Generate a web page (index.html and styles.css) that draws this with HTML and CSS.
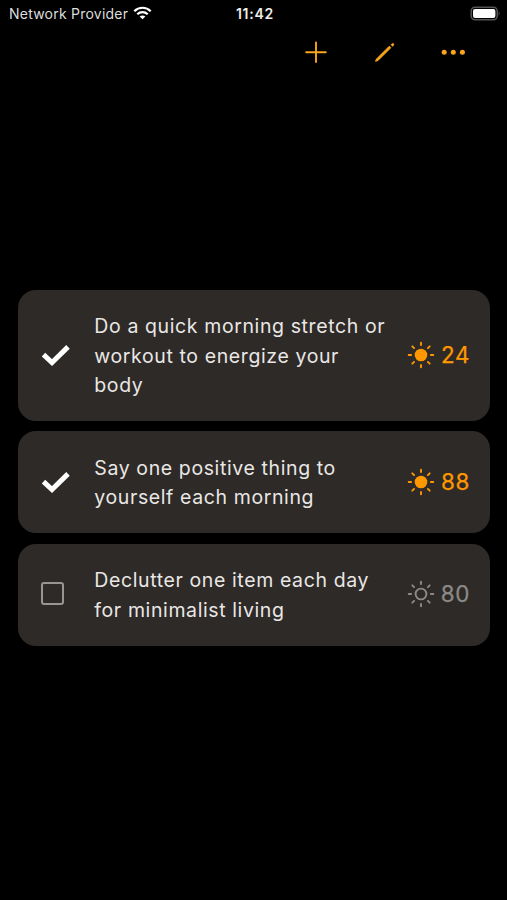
FILE: index.html
```html
<!DOCTYPE html>
<html lang="en">
<head>
<meta charset="utf-8">
<title>Habits</title>
<link rel="stylesheet" href="styles.css">
</head>
<body>
<svg class="defs" aria-hidden="true">
  <symbol id="rays" viewBox="-14 -14 28 28">
    <path d="M0-9.9V-12.3M0 9.9V12.3M-9.9 0H-12.3M9.9 0H12.3M-6.9-6.9L-8.7-8.7M6.9-6.9L8.7-8.7M-6.9 6.9L-8.7 8.7M6.9 6.9L8.7 8.7" fill="none" stroke="currentColor" stroke-width="1.9" stroke-linecap="round"/>
  </symbol>
  <symbol id="check" viewBox="0 0 30 24">
    <path d="M3.5 11.6L12 19.5L28 3.9" fill="none" stroke="currentColor" stroke-width="5"/>
  </symbol>
</svg>
<header class="status">
  <div class="carrier"><span>Network Provider</span>
    <svg class="wifi" viewBox="0 0 20 14"><g fill="none" stroke="currentColor" stroke-width="2.3"><path d="M1.4 5.1C6.2.3 13.8.3 18.6 5.1"/><path d="M4.5 8.3C7.6 5.3 12.4 5.3 15.5 8.3"/></g><path d="M7 10.7C8.7 9.2 11.3 9.2 13 10.7L10 13.6Z" fill="currentColor"/></svg>
  </div>
  <time class="clock">11:42</time>
  <svg class="battery" viewBox="0 0 31 15"><rect x="1.2" y="1.2" width="26" height="12.6" rx="3.8" fill="none" stroke="#555" stroke-width="1.5"/><rect x="3" y="3" width="22.4" height="9" rx="2" fill="#fff"/><path d="M28.6 5.3Q30.6 7.5 28.6 9.7Z" fill="#555"/></svg>
</header>
<nav class="toolbar">
  <svg class="tool" viewBox="0 0 24 24"><path d="M12 2.4V22M2.2 12.2H21.8" fill="none" stroke="currentColor" stroke-width="1.9" stroke-linecap="round"/></svg>
  <svg class="tool" viewBox="0 0 24 24"><path d="M2.6 21.3L3.5 19L16.3 6.2L17.8 7.7L5 20.5Z" fill="currentColor" stroke="currentColor" stroke-width="1" stroke-linejoin="round"/><path d="M17.9 4.7L18.9 3.7Q19.9 3 20.7 3.7Q21.3 4.5 20.6 5.4L19.6 6.4Z" fill="currentColor" stroke="currentColor" stroke-width=".4"/></svg>
  <svg class="tool" viewBox="0 0 24 24"><g fill="currentColor"><circle cx="3.2" cy="12.3" r="2.5"/><circle cx="12.3" cy="12.3" r="2.5"/><circle cx="21.4" cy="12.3" r="2.5"/></g></svg>
</nav>
<main class="habits">
  <article class="card">
    <svg class="mark"><use href="#check"/></svg>
    <p class="title">Do a quick morning stretch or<br>workout to energize your<br>body</p>
    <div class="streak"><svg class="sun" viewBox="-14 -14 28 28"><circle r="6.3" fill="currentColor"/><use href="#rays" x="-14" y="-14" width="28" height="28"/></svg><span>24</span></div>
  </article>
  <article class="card">
    <svg class="mark"><use href="#check"/></svg>
    <p class="title">Say one positive thing to<br>yourself each morning</p>
    <div class="streak"><svg class="sun" viewBox="-14 -14 28 28"><circle r="6.3" fill="currentColor"/><use href="#rays" x="-14" y="-14" width="28" height="28"/></svg><span>88</span></div>
  </article>
  <article class="card">
    <div class="mark"><div class="box"></div></div>
    <p class="title">Declutter one item each day<br>for minimalist living</p>
    <div class="streak idle"><svg class="sun" viewBox="-14 -14 28 28"><circle r="5.4" fill="none" stroke="currentColor" stroke-width="1.9"/><use href="#rays" x="-14" y="-14" width="28" height="28"/></svg><span>80</span></div>
  </article>
</main>
</body>
</html>
```

FILE: styles.css
```css
* { box-sizing: border-box; }
body {
  margin: 0;
  height: 900px;
  overflow: hidden;
  display: flex;
  flex-direction: column;
  background: #000;
  color: #e9e7e5;
  font-family: Inter, "Liberation Sans", sans-serif;
}
svg { display: block; flex: none; }
.defs { display: none; }
.status {
  height: 28px;
  padding: 0 6px 2px 9px;
  display: grid;
  grid-template-columns: 1fr auto 1fr;
  align-items: center;
}
.carrier {
  display: flex;
  align-items: center;
  gap: 5px;
  font-size: 14px;
  letter-spacing: .23px;
  white-space: nowrap;
  color: #ddd;
}
.wifi { width: 19px; height: 14px; color: #fff; }
.clock {
  font-size: 14px;
  font-weight: 600;
  letter-spacing: .75px;
  color: #eee;
}
.battery { width: 31px; height: 15px; justify-self: end; }
.toolbar {
  height: 48px;
  padding-right: 42px;
  display: flex;
  justify-content: flex-end;
  align-items: center;
  gap: 44.5px;
  color: #f9a51d;
}
.tool { width: 24px; height: 24px; }
.habits {
  margin: 213.5px 17px 0 18px;
  display: flex;
  flex-direction: column;
  gap: 10.3px;
}
.card {
  padding: 21.6px 20px 21.6px 22px;
  display: flex;
  align-items: center;
  background: #2e2a27;
  border-radius: 18px;
}
.mark { width: 30px; height: 24px; margin-bottom: 1px; color: #fff; }
.box {
  width: 23px;
  height: 23px;
  margin-left: 1px;
  border: 2px solid #989592;
  border-radius: 3px;
}
.title {
  flex: 1;
  margin: 0 0 -.9px 24.3px;
  padding-top: 1.2px;
  font-size: 19.5px;
  line-height: 29.3px;
  letter-spacing: .61px;
  white-space: nowrap;
}
.streak {
  display: flex;
  align-items: center;
  gap: 6px;
  margin-bottom: 1px;
  font-size: 22.4px;
  line-height: 28px;
  font-weight: 400;
  letter-spacing: .6px;
  color: #ff9800;
  -webkit-text-stroke: .25px currentColor;
}
.idle { color: #8d8a87; }
.sun { width: 28px; height: 28px; }
```
